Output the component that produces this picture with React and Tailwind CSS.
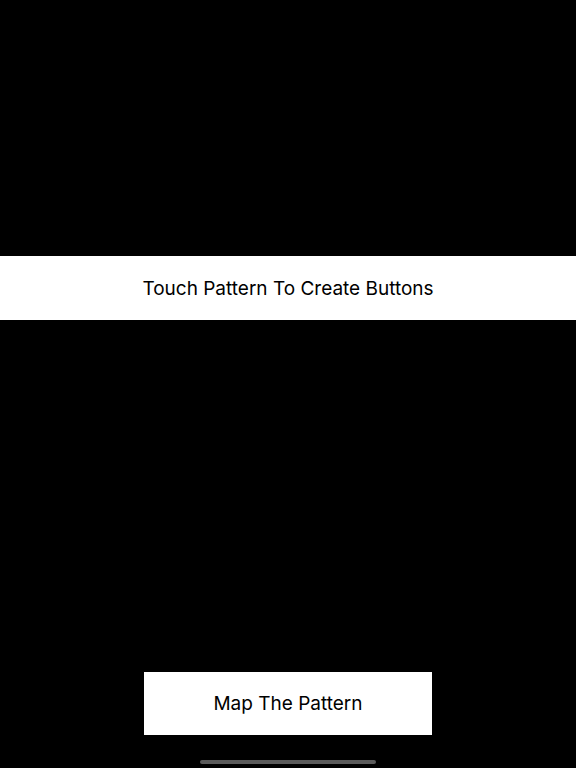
export default function App() {
  return (
    <div
      className="flex h-[768px] w-full flex-col bg-black"
      style={{ fontFamily: "Inter, 'Noto Sans', sans-serif" }}
    >
      <div className="h-[256px]" />
      <div className="flex h-[64px] items-center justify-center bg-white pt-[2px] text-[19px] text-black">
        Touch Pattern To Create Buttons
      </div>
      <div className="flex-1" />
      <div className="flex justify-center">
        <button className="flex h-[63px] w-[288px] items-center justify-center bg-white pt-[2px] text-[19px] text-black">
          Map The Pattern
        </button>
      </div>
      <div className="flex h-[33px] items-end justify-center pb-[4px]">
        <div className="h-[4px] w-[176px] rounded-full bg-[#5a5a5a]" />
      </div>
    </div>
  );
}
